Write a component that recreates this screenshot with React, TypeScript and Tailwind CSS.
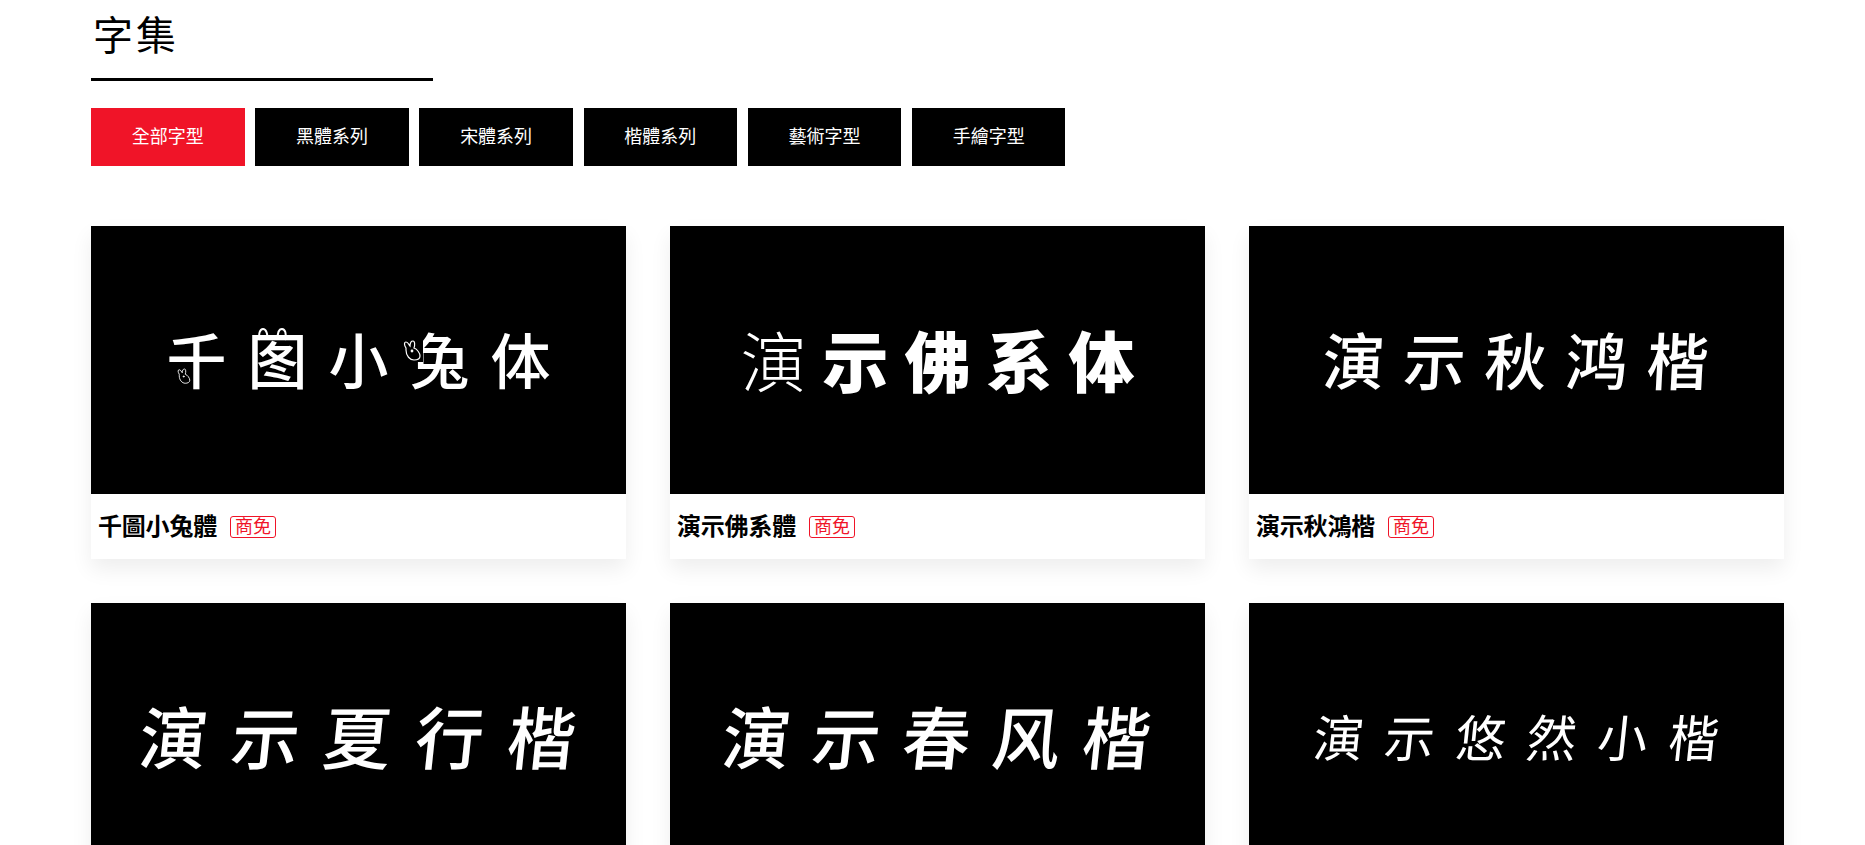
const FONT = "font-['Inter','Noto_Sans_CJK_TC',sans-serif]";

const tabs = ["全部字型", "黑體系列", "宋體系列", "楷體系列", "藝術字型", "手繪字型"];

const fonts = [
  { name: "千圖小兔體", lead: "", preview: "千图小兔体", cls: "text-[60px] tracking-[21px] pl-[21px] font-medium" },
  { name: "演示佛系體", lead: "演", preview: "示佛系体", cls: "text-[66px] tracking-[16px] pl-[16px] font-black" },
  { name: "演示秋鴻楷", lead: "", preview: "演示秋鸿楷", cls: "text-[62px] tracking-[19px] pl-[19px] font-medium -skew-x-3" },
  { name: "", lead: "", preview: "演示夏行楷", cls: "text-[68px] tracking-[24px] pl-[24px] font-medium -skew-x-6" },
  { name: "", lead: "", preview: "演示春风楷", cls: "text-[68px] tracking-[22px] pl-[22px] font-medium -skew-x-6" },
  { name: "", lead: "", preview: "演示悠然小楷", cls: "text-[50px] tracking-[21px] pl-[21px] font-normal -skew-x-6" },
];

// little rabbit drawn into the 千圖小兔 sample
const Bunny = ({ className }: { className: string }) => (
  <svg viewBox="0 0 20 22" fill="none" stroke="white" strokeWidth="1.2" className={className}>
    <path d="M3 8C1 5 1 2 3 2c2 0 3 3 4 4 0-3 1-5 3-5s2 4 1 7c3 1 6 5 6 8 0 3-3 4-6 4-4 0-8-4-8-10z" />
    <circle cx="9" cy="11" r="0.8" fill="white" />
  </svg>
);

const RabbitDecor = () => (
  <>
    <svg viewBox="0 0 30 13" fill="none" stroke="white" strokeWidth="2" className="absolute left-[167px] top-[102px] h-[13px] w-[30px]">
      <path d="M2 12C0 6 2 1 5 1s5 5 4 10" />
      <path d="M20 11c-1-6 1-10 4-10s5 5 3 11" />
    </svg>
    <Bunny className="absolute left-[312px] top-[114px] h-[22px] w-[20px] bg-black" />
    <Bunny className="absolute left-[86px] top-[142px] h-[17px] w-[15px] bg-black" />
  </>
);

export default function App() {
  return (
    <div className={`h-screen overflow-hidden bg-white pl-[91px] pr-[81px] text-black ${FONT}`}>
      <h1 className="w-[342px] border-b-[3px] border-black pt-[7px] pb-[14px] pl-[2px] text-[40px] leading-[57px] font-normal tracking-[3px]">
        字集
      </h1>
      <div className="mt-[27px] flex gap-[10.7px]">
        {tabs.map((tab, i) => (
          <button
            key={tab}
            className={`h-[58px] w-[153.5px] pb-[2px] text-[18px] text-white ${i === 0 ? "bg-[#f01428]" : "bg-black"}`}
          >
            {tab}
          </button>
        ))}
      </div>
      <div className="mt-[60px] grid grid-cols-3 gap-[44px]">
        {fonts.map((font, i) => (
          <div key={font.preview} className="bg-white shadow-[0_10px_20px_rgba(0,0,0,0.07)]">
            <div className="relative flex h-[268px] items-center justify-center bg-black pb-[5px] text-white">
              <span lang="zh-CN" className={`font-['Noto_Sans_CJK_SC',sans-serif] leading-none ${font.cls}`}>
                {font.lead && <span className="font-light">{font.lead}</span>}
                {font.preview}
              </span>
              {i === 0 && <RabbitDecor />}
            </div>
            {font.name && (
              <div className="flex h-[65px] items-center gap-[13px] px-[7px]">
                <span className="text-[24px] font-bold tracking-[-0.2px]">{font.name}</span>
                <span className="rounded-[3px] border border-[#f01428] px-[4px] text-[18px] leading-[20px] text-[#f01428]">
                  商免
                </span>
              </div>
            )}
          </div>
        ))}
      </div>
    </div>
  );
}
